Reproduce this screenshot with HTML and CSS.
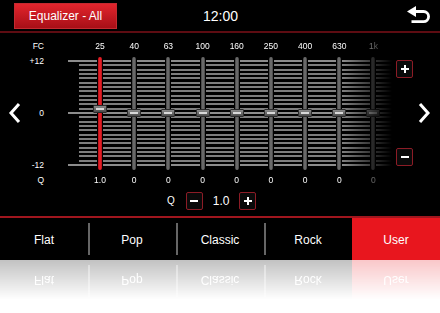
FILE: index.html
```html
<!DOCTYPE html>
<html lang="en">

<head>
    <meta charset="UTF-8">
    <meta name="viewport" content="width=device-width, initial-scale=1.0">
    <title>Equalizer</title>
    <link rel="stylesheet" href="styles.css">
</head>

<body>
    <div class="screen">
        <header class="top">
            <div class="top-left">
                <button class="mode">Equalizer - All</button>
            </div>
            <div class="clock">12:00</div>
            <div class="top-right">
                <svg class="back" width="24" height="22" viewBox="0 0 24 22">
                    <path d="M1 6.5 L10 1 L10 12 Z" fill="#fff" />
                    <path d="M8 6.5 H17.5 A5.1 5.1 0 0 1 17.5 16.7 H5.5" fill="none" stroke="#fff" stroke-width="2.8" />
                </svg>
            </div>
        </header>

        <main class="eq">
            <svg class="nav nav-prev" width="14" height="22" viewBox="0 0 14 22">
                <polyline points="11,2 3,11 11,20" fill="none" stroke="#fff" stroke-width="3" />
            </svg>

            <div class="scale-head">FC</div>
            <div class="scale">
                <span>+12</span>
                <span>0</span>
                <span>-12</span>
            </div>
            <div class="scale-foot">Q</div>

            <div class="board">
                <div class="freqs">
                    <span>25</span><span>40</span><span>63</span><span>100</span><span>160</span>
                    <span>250</span><span>400</span><span>630</span><span>1k</span>
                </div>
                <div class="sliders">
                    <div class="band active" style="--v:1"><div class="track"></div><div class="knob"></div></div>
                    <div class="band" style="--v:0"><div class="track"></div><div class="knob"></div></div>
                    <div class="band" style="--v:0"><div class="track"></div><div class="knob"></div></div>
                    <div class="band" style="--v:0"><div class="track"></div><div class="knob"></div></div>
                    <div class="band" style="--v:0"><div class="track"></div><div class="knob"></div></div>
                    <div class="band" style="--v:0"><div class="track"></div><div class="knob"></div></div>
                    <div class="band" style="--v:0"><div class="track"></div><div class="knob"></div></div>
                    <div class="band" style="--v:0"><div class="track"></div><div class="knob"></div></div>
                    <div class="band" style="--v:0"><div class="track"></div><div class="knob"></div></div>
                </div>
                <div class="qvals">
                    <span>1.0</span><span>0</span><span>0</span><span>0</span><span>0</span>
                    <span>0</span><span>0</span><span>0</span><span>0</span>
                </div>
            </div>

            <div class="steps">
                <button class="pm plus"></button>
                <button class="pm minus"></button>
            </div>

            <svg class="nav nav-next" width="14" height="22" viewBox="0 0 14 22">
                <polyline points="3,2 11,11 3,20" fill="none" stroke="#fff" stroke-width="3" />
            </svg>

            <div class="qctrl">
                <span class="qlabel">Q</span>
                <button class="pm minus"></button>
                <span class="qnum">1.0</span>
                <button class="pm plus"></button>
            </div>
        </main>

        <nav class="presets">
            <div class="preset">Flat</div>
            <div class="preset">Pop</div>
            <div class="preset">Classic</div>
            <div class="preset">Rock</div>
            <div class="preset selected">User</div>
        </nav>
    </div>

    <!-- mirrored copy of the preset bar -->
    <div class="reflection" aria-hidden="true">
        <div class="presets">
            <div class="preset">Flat</div>
            <div class="preset">Pop</div>
            <div class="preset">Classic</div>
            <div class="preset">Rock</div>
            <div class="preset selected">User</div>
        </div>
    </div>
</body>

</html>
```

FILE: styles.css
```css
* {
    padding: 0;
    margin: 0;
    box-sizing: border-box;
}

body {
    background-color: #fff;
    font-family: "Liberation Sans", Arial, sans-serif;
    color: #fff;
    user-select: none;
}

.screen {
    width: 440px;
    background-color: #000;
}

/* top bar */
.top {
    display: grid;
    grid-template-columns: 1fr auto 1fr;
    align-items: center;
    height: 33px;
    border-bottom: 2px solid #5e0c12;
}

.top-left {
    padding-left: 14px;
}

.mode {
    width: 103px;
    height: 26px;
    border: 1px solid #c42a30;
    background: linear-gradient(#e2252d, #a80f17);
    color: #fff;
    font-family: inherit;
    font-size: 12px;
    outline: none;
}

.clock {
    font-size: 14px;
    padding-left: 1px;
}

.top-right {
    display: flex;
    justify-content: flex-end;
    padding-right: 10px;
}

.back {
    display: block;
    margin-top: 1px;
}

/* equalizer */
.eq {
    display: grid;
    grid-template-columns: 12px 22px 24px 324px 21px 5px 12px;
    grid-template-rows: 15px 2px 114px 21px 19px;
    height: 183px;
    padding: 6px 10px 0;
    font-size: 8.5px;
}

.nav {
    grid-row: 3;
    align-self: center;
    display: block;
}

.nav-prev {
    grid-column: 1;
    margin-left: -2px;
}

.nav-next {
    grid-column: 7;
    margin-left: -1px;
}

.scale-head,
.scale-foot {
    grid-column: 2;
    text-align: right;
    line-height: 15px;
}

.scale-head {
    grid-row: 1;
}

.scale-foot {
    grid-row: 4;
    line-height: 21px;
}

.scale {
    grid-column: 2;
    grid-row: 3;
    display: flex;
    flex-direction: column;
    justify-content: space-between;
    align-items: flex-end;
}

.scale span {
    line-height: 10px;
}

.board {
    grid-column: 4;
    grid-row: 1 / 5;
    -webkit-mask-image: linear-gradient(to right, #000 275px, transparent 324px);
    mask-image: linear-gradient(to right, #000 275px, transparent 324px);
}

.freqs,
.qvals,
.sliders {
    display: grid;
    grid-template-columns: repeat(9, 34.2px);
    padding-left: 14.9px;
    text-align: center;
}

.freqs {
    height: 15px;
    line-height: 15px;
    margin-bottom: 2px;
}

.qvals {
    height: 21px;
    line-height: 21px;
}

.sliders {
    height: 114px;
    background:
        linear-gradient(#8c8c8c, #8c8c8c) 0 4px / 100% 2px no-repeat,
        linear-gradient(#8c8c8c, #8c8c8c) 0 56px / 100% 2px no-repeat,
        linear-gradient(#8c8c8c, #8c8c8c) 0 108px / 100% 2px no-repeat,
        repeating-linear-gradient(to bottom, #7e7e7e 0 2px, transparent 2px 4.333px) 11px 4px / calc(100% - 11px) 106px no-repeat;
}

.band {
    position: relative;
}

.track {
    width: 4px;
    height: 113px;
    margin: 1px auto 0;
    border-radius: 2px;
    background: linear-gradient(to right, #404040, #767676, #404040);
    box-shadow: 0 0 0 1px #000;
}

.band.active .track {
    background: linear-gradient(to right, #b40e16, #f0252c, #b40e16);
}

.knob {
    position: absolute;
    left: 50%;
    top: calc(53px - var(--v) * 4.333px);
    width: 14px;
    height: 8px;
    margin-left: -7px;
    border: 1px solid #2a2a2a;
    border-radius: 1px;
    background: linear-gradient(#8a8a8a, #4a4a4a);
}

.knob::after {
    content: "";
    display: block;
    height: 2px;
    margin: 2px 2px 0;
    background-color: #d8d8d8;
}

/* plus / minus buttons */
.pm {
    position: relative;
    width: 17px;
    height: 18px;
    border: 1.5px solid #8c1c26;
    border-radius: 2px;
    background-color: #0a0a0a;
    outline: none;
}

.pm::before,
.plus::after {
    content: "";
    position: absolute;
    left: 50%;
    top: 50%;
    background-color: #fff;
}

.pm::before {
    width: 8px;
    height: 2px;
    margin: -1px 0 0 -4px;
}

.plus::after {
    width: 2px;
    height: 8px;
    margin: -4px 0 0 -1px;
}

.steps {
    grid-column: 5;
    grid-row: 3;
    display: flex;
    flex-direction: column;
    justify-content: space-between;
    align-items: flex-end;
    padding: 4px 0;
}

.qctrl {
    grid-column: 4;
    grid-row: 5;
    display: flex;
    align-items: center;
    padding-left: 99px;
}

.qlabel {
    font-size: 10px;
    margin-right: 11px;
}

.qnum {
    font-size: 12px;
    margin: 0 10px;
}

/* presets */
.presets {
    display: grid;
    grid-template-columns: repeat(5, 88px);
    height: 44px;
    border-top: 2px solid #a0161e;
    background-color: #000;
}

.preset {
    display: flex;
    align-items: center;
    justify-content: center;
    font-size: 12px;
    padding-top: 1px;
    background: linear-gradient(#666, #666) 0 center / 2px 32px no-repeat;
}

.preset:first-child {
    background: none;
}

.preset.selected {
    background: #e8161e;
}

.reflection {
    width: 440px;
    height: 53px;
    overflow: hidden;
}

.reflection .presets {
    transform: scaleY(-1);
    -webkit-mask-image: linear-gradient(to bottom, transparent 10%, rgba(0, 0, 0, .24));
    mask-image: linear-gradient(to bottom, transparent 10%, rgba(0, 0, 0, .24));
}
```
